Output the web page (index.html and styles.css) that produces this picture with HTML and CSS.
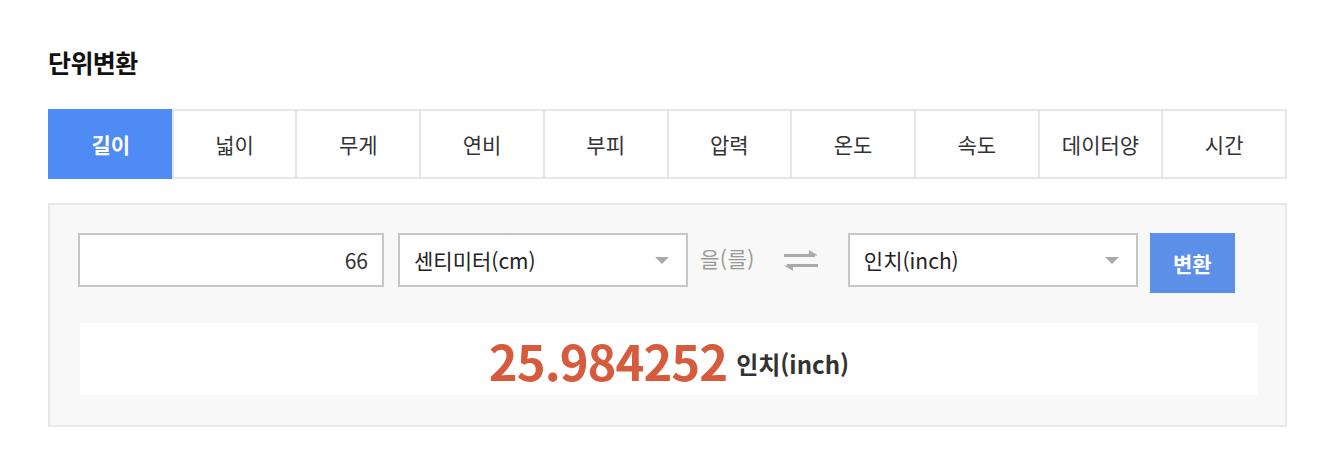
FILE: index.html
```html
<!DOCTYPE html>
<html lang="ko">
<head>
<meta charset="utf-8">
<link rel="stylesheet" href="styles.css">
</head>
<body>
<div class="page">
  <h2 class="title">단위변환</h2>
  <ul class="tabs">
    <li class="tab active">길이</li>
    <li class="tab">넓이</li>
    <li class="tab">무게</li>
    <li class="tab">연비</li>
    <li class="tab">부피</li>
    <li class="tab">압력</li>
    <li class="tab">온도</li>
    <li class="tab">속도</li>
    <li class="tab">데이터양</li>
    <li class="tab">시간</li>
  </ul>
  <div class="panel">
    <div class="row">
      <div class="input">66</div>
      <div class="select from"><span>센티미터(cm)</span><i class="caret"></i></div>
      <span class="josa">을(를)</span>
      <svg class="swap" width="38" height="26" viewBox="0 0 38 26">
        <path d="M2 8.5 H33" stroke="#aaa" stroke-width="3" fill="none"/>
        <path d="M27 3 L36 8.5 L27 8.5 Z" fill="#aaa"/>
        <path d="M36 18.5 H5" stroke="#aaa" stroke-width="3" fill="none"/>
        <path d="M11 24 L2 18.5 L11 18.5 Z" fill="#aaa"/>
      </svg>
      <div class="select to"><span>인치(inch)</span><i class="caret"></i></div>
      <button class="btn">변환</button>
    </div>
    <div class="result">
      <strong class="value">25.984252</strong>
      <span class="unit">인치(inch)</span>
    </div>
  </div>
</div>
</body>
</html>
```
FILE: styles.css
```css
* { box-sizing: border-box; }
html, body { margin: 0; padding: 0; background: #fff; }
body { font-family: "Noto Sans CJK KR", "Noto Sans", sans-serif; color: #222; }
.page { padding: 42px 57px 0 48px; }
.title { margin: 0; font-size: 25px; font-weight: 700; line-height: 40px; color: #111; letter-spacing: -0.6px; }
.tabs { list-style: none; margin: 27px 0 0; padding: 0; display: flex; border: 2px solid #e6e6e6; border-left: 0; height: 70px; }
.tab { flex: 1; display: flex; align-items: center; justify-content: center; font-size: 21px; color: #333; border-left: 2px solid #e6e6e6; }
.tab.active { background: #4f8bf5; color: #fff; font-weight: 700; border-left-color: #4f8bf5; margin: -2px 0; height: 70px; }
.panel { margin-top: 24px; background: #f8f8f8; border: 2px solid #e8e8e8; padding: 28px 27px 30px 28px; }
.row { display: flex; align-items: flex-start; }
.input { width: 306px; height: 54px; background: #fff; border: 2px solid #c6c6c6; font-size: 21px; text-align: right; padding-right: 14px; line-height: 50px; color: #333; }
.select { width: 290px; height: 54px; background: #fff; border: 2px solid #c6c6c6; display: flex; align-items: center; justify-content: space-between; padding: 0 17px 0 14px; font-size: 21px; color: #222; }
.select.from { margin-left: 14px; }
.select.to { margin-left: 28px; }
.caret { width: 0; height: 0; border-left: 7px solid transparent; border-right: 7px solid transparent; border-top: 7px solid #aaa; }
.josa { font-size: 21px; color: #999; margin-left: 12px; line-height: 50px; letter-spacing: 0.5px; }
.swap { margin: 14px 0 0 27px; }
.btn { margin-left: 12px; width: 85px; height: 60px; border: 0; background: #5b8fe8; color: #fff; font-family: inherit; font-size: 21px; font-weight: 700; padding: 0; }
.result { margin: 30px 0 0 2px; height: 72px; background: #fff; display: flex; align-items: center; justify-content: center; gap: 9px; }
.value { font-size: 49px; font-weight: 700; color: #d65a3c; letter-spacing: -1px; line-height: 1; }
.unit { font-size: 24px; font-weight: 700; color: #333; margin-top: 8px; }
```
